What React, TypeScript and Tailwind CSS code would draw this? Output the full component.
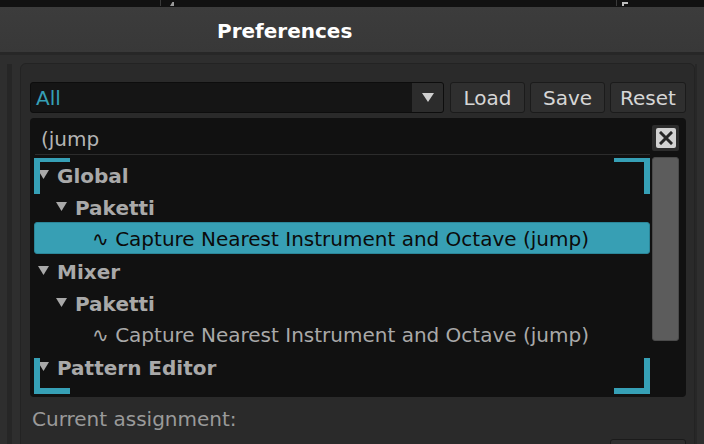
import type { ReactNode } from "react"

const font = { fontFamily: '"DejaVu Sans", "Liberation Sans", sans-serif' }

function Tri({ className = "" }: { className?: string }) {
  return (
    <svg width="11" height="9" viewBox="0 0 11 9" className={className}>
      <path d="M0 0 H11 L5.5 9 Z" fill="currentColor" />
    </svg>
  )
}

function Group({ level, label }: { level: number; label: string }) {
  return (
    <div
      className="flex h-8 items-center gap-2 text-[20px] font-bold text-[#a9a9a9]"
      style={{ paddingLeft: 4 + level * 18 }}
    >
      <Tri className="mt-[1px] text-[#a9a9a9]" />
      <span className="pt-[3px] leading-none">{label}</span>
    </div>
  )
}

function Item({ label, selected }: { label: string; selected?: boolean }) {
  return (
    <div
      className={
        selected
          ? "flex h-8 items-center rounded-[3px] border border-[#2b8699] bg-[#379fb4] pl-[57px] text-[20px] text-[#0b0b0b]"
          : "flex h-8 items-center border border-transparent pl-[57px] text-[20px] text-[#a9a9a9]"
      }
    >
      <span className="pt-[2px] leading-none">∿ {label}</span>
    </div>
  )
}

function Btn({ children, w }: { children: ReactNode; w: string }) {
  return (
    <div
      className={`flex h-[31px] ${w} items-center justify-center rounded-[3px] border border-[#1b1b1b] bg-[#2f2f2f] pt-[1px] text-[20px] text-[#d6d6d6]`}
    >
      {children}
    </div>
  )
}

function Bracket({ pos }: { pos: string }) {
  return <div className={`pointer-events-none absolute h-9 w-9 border-[#36a0b6] ${pos}`} />
}

export default function App() {
  return (
    <div className="relative h-[444px] w-[704px] overflow-hidden bg-[#2e2e2e]" style={font}>
      {/* strip of the window behind */}
      <div className="relative h-[7px] bg-[#111111]">
        <div className="absolute left-[160px] top-0 h-[6px] w-px bg-[#3a3a3a]" />
        <div className="absolute left-[170px] top-[2px] h-[4px] w-[4px] bg-[#9a9a9a] [clip-path:polygon(60%_0,100%_0,100%_100%,0_100%)]" />
        <div className="absolute left-[616px] top-0 h-[6px] w-px bg-[#3a3a3a]" />
        <div className="absolute left-[622px] top-[2px] h-[4px] w-[2px] bg-[#bdbdbd]" />
        <div className="absolute left-[622px] top-[2px] h-[2px] w-[6px] bg-[#bdbdbd]" />
      </div>

      {/* title bar */}
      <div className="flex h-[45px] items-center bg-gradient-to-b from-[#3c3c3c] to-[#383838] pl-[217px] pt-[2px]">
        <span className="text-[20px] font-bold text-white">Preferences</span>
      </div>
      <div className="h-[3px] bg-[#272727]" />

      <div className="flex">
        <div className="ml-[7px] mt-[9px] h-[400px] w-[5px] bg-[#262626]" />
        <div className="ml-2 mt-2 flex w-[675px] flex-col rounded-md border border-[#232323] bg-[#2a2a2a] pl-[9px] pr-[8px] pt-[18px]">
          {/* preset row */}
          <div className="flex items-center gap-[5px]">
            <div className="mr-px flex h-[31px] flex-1 overflow-hidden rounded-[3px] border border-[#0d0d0d] bg-[#151515]">
              <div className="flex flex-1 items-center pl-[5px] pt-[1px] text-[20px] text-[#36a0b6]">All</div>
              <div className="flex w-[31px] items-center justify-center bg-[#2c2c2c] text-[#cfcfcf]">
                <svg width="12" height="9" viewBox="0 0 12 9">
                  <path d="M0 0 H12 L6 9 Z" fill="currentColor" />
                </svg>
              </div>
            </div>
            <Btn w="w-[75px]">Load</Btn>
            <Btn w="w-[75px]">Save</Btn>
            <Btn w="w-[76px]">Reset</Btn>
          </div>

          {/* key list */}
          <div className="relative mt-[5px] flex h-[279px] gap-[2px] rounded bg-[#111111] pl-1 pr-[7px]">
            <div className="flex w-[616px] flex-col">
              <div className="ml-px flex h-[37px] items-center border-b border-[#2c2c2c] pl-[6px] pt-[5px] text-[20px] text-[#b4b4b4]">
                (jump
              </div>
              <div className="mt-[3px]">
                <Group level={0} label="Global" />
                <Group level={1} label="Paketti" />
                <Item label="Capture Nearest Instrument and Octave (jump)" selected />
                <Group level={0} label="Mixer" />
                <Group level={1} label="Paketti" />
                <Item label="Capture Nearest Instrument and Octave (jump)" />
                <Group level={0} label="Pattern Editor" />
              </div>
            </div>
            <div className="flex w-[27px] flex-col">
              <div className="mt-[7px] flex h-[26px] items-center justify-center rounded-[2px] bg-[#2c2c2c]">
                <div className="flex h-[20px] w-[20px] items-center justify-center rounded-[2px] bg-[#d2d2d2]">
                  <svg width="14" height="14" viewBox="0 0 14 14">
                    <path d="M2 2 L12 12 M12 2 L2 12" stroke="#262626" strokeWidth="3" strokeLinecap="square" />
                  </svg>
                </div>
              </div>
              <div className="mt-[6px] h-[184px] rounded-[3px] border border-[#4a4a4a] bg-[#5c5c5c]" />
            </div>

            <Bracket pos="left-1 top-[40px] border-l-[6px] border-t-[4px]" />
            <Bracket pos="left-[584px] top-[40px] border-r-[6px] border-t-[4px]" />
            <Bracket pos="left-1 top-[240px] border-b-[6px] border-l-[6px]" />
            <Bracket pos="left-[584px] top-[240px] border-b-[6px] border-r-[6px]" />
          </div>

          <div className="flex h-[42px] items-center pl-[2px] pt-[2px] text-[20px] text-[#9a9a9a]">
            Current assignment:
          </div>
          <div className="flex justify-end">
            <div className="h-8 w-[76px] rounded-[3px] border border-[#1b1b1b] bg-[#2f2f2f]" />
          </div>
        </div>
        <div className="ml-0 mt-[9px] h-[400px] w-[2px] bg-[#272727]" />
      </div>
    </div>
  )
}
